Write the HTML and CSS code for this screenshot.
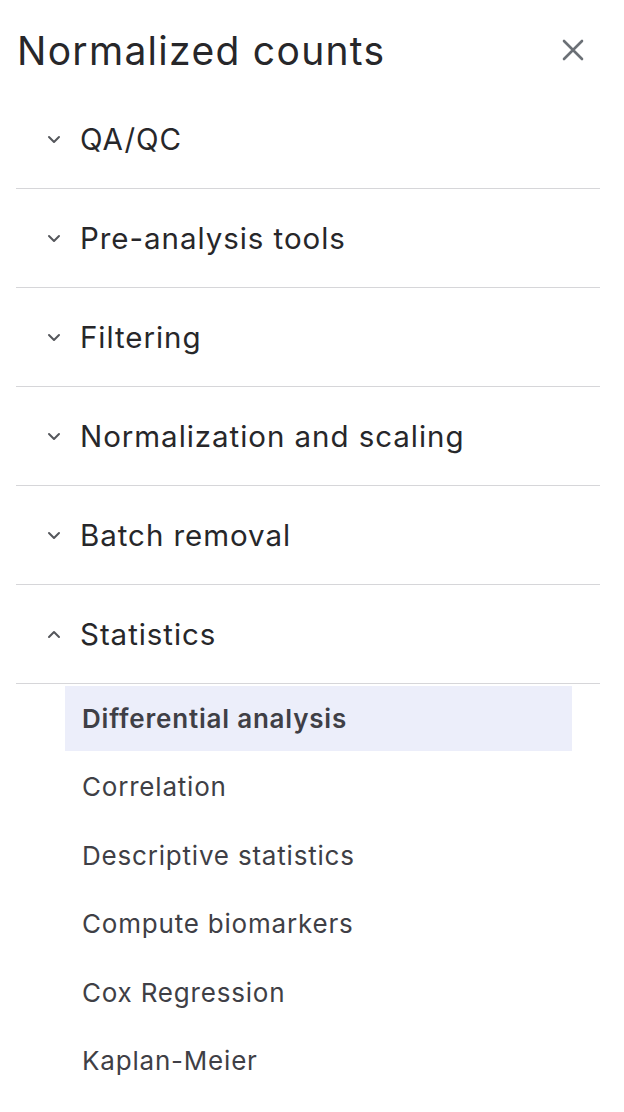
FILE: index.html
```html
<!DOCTYPE html>
<html lang="en">
<head>
<meta charset="UTF-8">
<meta name="viewport" content="width=device-width, initial-scale=1.0">
<title>Normalized counts</title>
<link rel="stylesheet" href="styles.css">
</head>
<body>

<div class="panel">
  <div class="panel-header">
    <h2>Normalized counts</h2>
    <button class="close-btn" aria-label="Close">
      <svg width="22" height="22" viewBox="0 0 22 22"><path d="M2 2 L20 20 M20 2 L2 20" stroke="#6b7076" stroke-width="2.6" stroke-linecap="round" fill="none"/></svg>
    </button>
  </div>

  <div class="section">
    <div class="section-title"><svg class="chev" width="14" height="9" viewBox="0 0 14 9"><path d="M2 2 L7 7 L12 2" /></svg>QA/QC</div>
  </div>
  <div class="section">
    <div class="section-title"><svg class="chev" width="14" height="9" viewBox="0 0 14 9"><path d="M2 2 L7 7 L12 2" /></svg>Pre-analysis tools</div>
  </div>
  <div class="section">
    <div class="section-title"><svg class="chev" width="14" height="9" viewBox="0 0 14 9"><path d="M2 2 L7 7 L12 2" /></svg>Filtering</div>
  </div>
  <div class="section">
    <div class="section-title"><svg class="chev" width="14" height="9" viewBox="0 0 14 9"><path d="M2 2 L7 7 L12 2" /></svg>Normalization and scaling</div>
  </div>
  <div class="section">
    <div class="section-title"><svg class="chev" width="14" height="9" viewBox="0 0 14 9"><path d="M2 2 L7 7 L12 2" /></svg>Batch removal</div>
  </div>
  <div class="section">
    <div class="section-title"><svg class="chev" width="14" height="9" viewBox="0 0 14 9"><path d="M2 7 L7 2 L12 7" /></svg>Statistics</div>
  </div>

  <ul class="sub-list">
    <li class="active">Differential analysis</li>
    <li>Correlation</li>
    <li>Descriptive statistics</li>
    <li>Compute biomarkers</li>
    <li>Cox Regression</li>
    <li>Kaplan-Meier</li>
  </ul>
</div>

</body>
</html>
```

FILE: styles.css
```css
body {
  margin: 0;
  font-family: Inter, "Noto Sans", Arial, sans-serif;
  background: #fff;
  color: #27272a;
}
.panel {
  padding: 0 24px 0 16px;
}
.panel-header {
  display: flex;
  align-items: center;
  justify-content: space-between;
  height: 90px;
  padding-top: 10px;
  box-sizing: border-box;
}
.panel-header h2 {
  margin: 0;
  padding-left: 1px;
  font-size: 39px;
  font-weight: 400;
  letter-spacing: 1.3px;
  color: #27272a;
}
.close-btn {
  background: none;
  border: none;
  padding: 0;
  margin-right: 16px;
  display: flex;
  cursor: pointer;
}
.section {
  border-bottom: 1px solid #d6d6d9;
}
.section-title {
  display: flex;
  align-items: center;
  height: 98px;
  font-size: 29.5px;
  letter-spacing: 0.95px;
  color: #27272a;
}
.chev {
  margin-left: 31px;
  margin-right: 19px;
  fill: none;
  stroke: #55575c;
  stroke-width: 2;
  stroke-linecap: round;
  stroke-linejoin: round;
}
.sub-list {
  list-style: none;
  margin: 2px 28px 0 49px;
  padding: 0;
}
.sub-list li {
  display: flex;
  align-items: center;
  height: 65px;
  margin-bottom: 3.4px;
  padding-left: 17px;
  font-size: 26px;
  letter-spacing: 0.8px;
  color: #3f3f46;
}
.sub-list li.active {
  background: #eceefa;
  font-weight: 600;
}
```
